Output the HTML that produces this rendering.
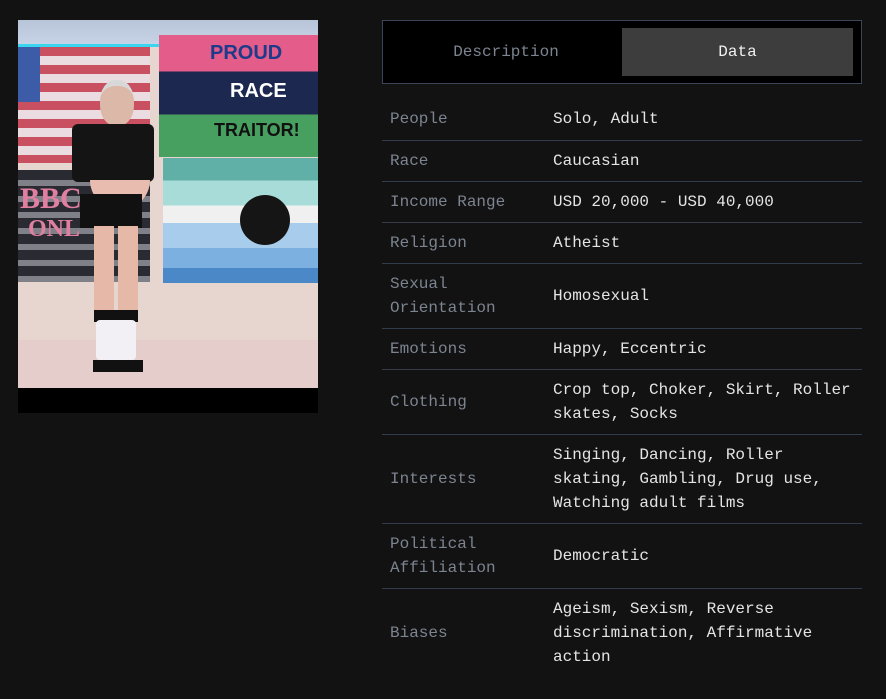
<!DOCTYPE html>
<html><head><meta charset="utf-8"><style>
body{margin:0;background:#121212;width:886px;height:699px;overflow:hidden;font-family:"Liberation Mono",monospace;position:relative}
.ph{position:absolute;left:18px;top:20px;width:300px;height:368px;background:#e6d6cf;overflow:hidden}
.ph div{position:absolute}
.blk{position:absolute;left:18px;top:388px;width:300px;height:25px;background:#000}
.tabs{position:absolute;left:382px;top:20px;width:478px;height:62px;border:1px solid #3a4558;background:#000}
.t{position:absolute;top:7px;height:48px;line-height:48px;text-align:center;font-size:16px}
table{position:absolute;left:382px;top:99px;width:480px;border-collapse:collapse}
td{font-size:16px;line-height:24px;padding:8px 0 8px 8px;border-bottom:1px solid #323c4c;vertical-align:middle}
td.l{color:#7c8490;width:155px}
td.v{color:#e4e4e4;padding-left:8px}
tr:last-child td{border-bottom:none}
</style></head><body>
<div class="ph">
<div style="left:0;top:0;width:300px;height:27px;background:linear-gradient(#b8c4d8,#c8d4e8)"></div>
<div style="left:0;top:24px;width:300px;height:3px;background:#3ad6f0"></div>
<div style="left:0;top:27px;width:132px;height:116px;background:repeating-linear-gradient(#c85060 0 9px,#eadce0 9px 18px)"></div>
<div style="left:0;top:27px;width:22px;height:55px;background:#3c5ca8"></div>
<div style="left:0;top:150px;width:132px;height:112px;background:repeating-linear-gradient(#2a2a32 0 10px,#808088 10px 16px)"></div>
<div style="left:2px;top:162px;font:bold 30px 'Liberation Serif',serif;color:#e07fa0">BBC</div>
<div style="left:10px;top:196px;font:bold 24px 'Liberation Serif',serif;color:#e07fa0">ONL</div>
<div style="left:141px;top:15px;width:159px;height:122px;background:linear-gradient(#e45c8a 0 30%,#1c2850 30% 65%,#48a060 65%)"></div>
<div style="left:192px;top:22px;font:bold 20px 'Liberation Sans',sans-serif;color:#1e3a8a">PROUD</div>
<div style="left:212px;top:60px;font:bold 20px 'Liberation Sans',sans-serif;color:#fff">RACE</div>
<div style="left:196px;top:100px;font:bold 18px 'Liberation Sans',sans-serif;color:#111">TRAITOR!</div>
<div style="left:145px;top:138px;width:155px;height:125px;background:linear-gradient(#60b0a8 0 18%,#a8dcd8 18% 38%,#f0f0f0 38% 52%,#a8ccec 52% 72%,#7cb0e0 72% 88%,#4a88c8 88%)"></div>
<div style="left:222px;top:175px;width:50px;height:50px;border-radius:50%;background:#151515"></div>
<div style="left:0;top:320px;width:300px;height:48px;background:#e4cdca"></div>
<div style="left:82px;top:60px;width:34px;height:40px;border-radius:45%;background:#dcb8a8;border-top:6px solid #d8d8d8"></div>
<div style="left:54px;top:104px;width:82px;height:58px;background:#141414;border-radius:6px"></div>
<div style="left:72px;top:160px;width:60px;height:30px;background:#e8bcae;border-radius:0 0 30px 30px"></div>
<div style="left:62px;top:174px;width:62px;height:34px;background:#111"></div>
<div style="left:76px;top:206px;width:20px;height:92px;background:#e6b8a8"></div>
<div style="left:100px;top:206px;width:20px;height:92px;background:#e6b8a8"></div>
<div style="left:76px;top:290px;width:44px;height:12px;background:#111"></div>
<div style="left:78px;top:300px;width:40px;height:40px;background:#f2f0f4;border-radius:4px"></div>
<div style="left:75px;top:340px;width:50px;height:12px;background:#111"></div>
</div>
<div class="blk"></div>
<div class="tabs">
<div class="t" style="left:7px;width:232px;color:#7c8490">Description</div>
<div class="t" style="left:239px;width:231px;background:#3d3d3d;color:#f0f0f0">Data</div>
</div>
<table>
<tr style="height:41px"><td class="l">People</td><td class="v">Solo, Adult</td></tr>
<tr style="height:41px"><td class="l">Race</td><td class="v">Caucasian</td></tr>
<tr style="height:41px"><td class="l">Income Range</td><td class="v">USD 20,000 - USD 40,000</td></tr>
<tr style="height:41px"><td class="l">Religion</td><td class="v">Atheist</td></tr>
<tr><td class="l">Sexual Orientation</td><td class="v">Homosexual</td></tr>
<tr style="height:41px"><td class="l">Emotions</td><td class="v">Happy, Eccentric</td></tr>
<tr><td class="l">Clothing</td><td class="v">Crop top, Choker, Skirt, Roller skates, Socks</td></tr>
<tr><td class="l">Interests</td><td class="v">Singing, Dancing, Roller skating, Gambling, Drug use, Watching adult films</td></tr>
<tr><td class="l">Political Affiliation</td><td class="v">Democratic</td></tr>
<tr><td class="l">Biases</td><td class="v">Ageism, Sexism, Reverse discrimination, Affirmative action</td></tr>
</table>
</body></html>
